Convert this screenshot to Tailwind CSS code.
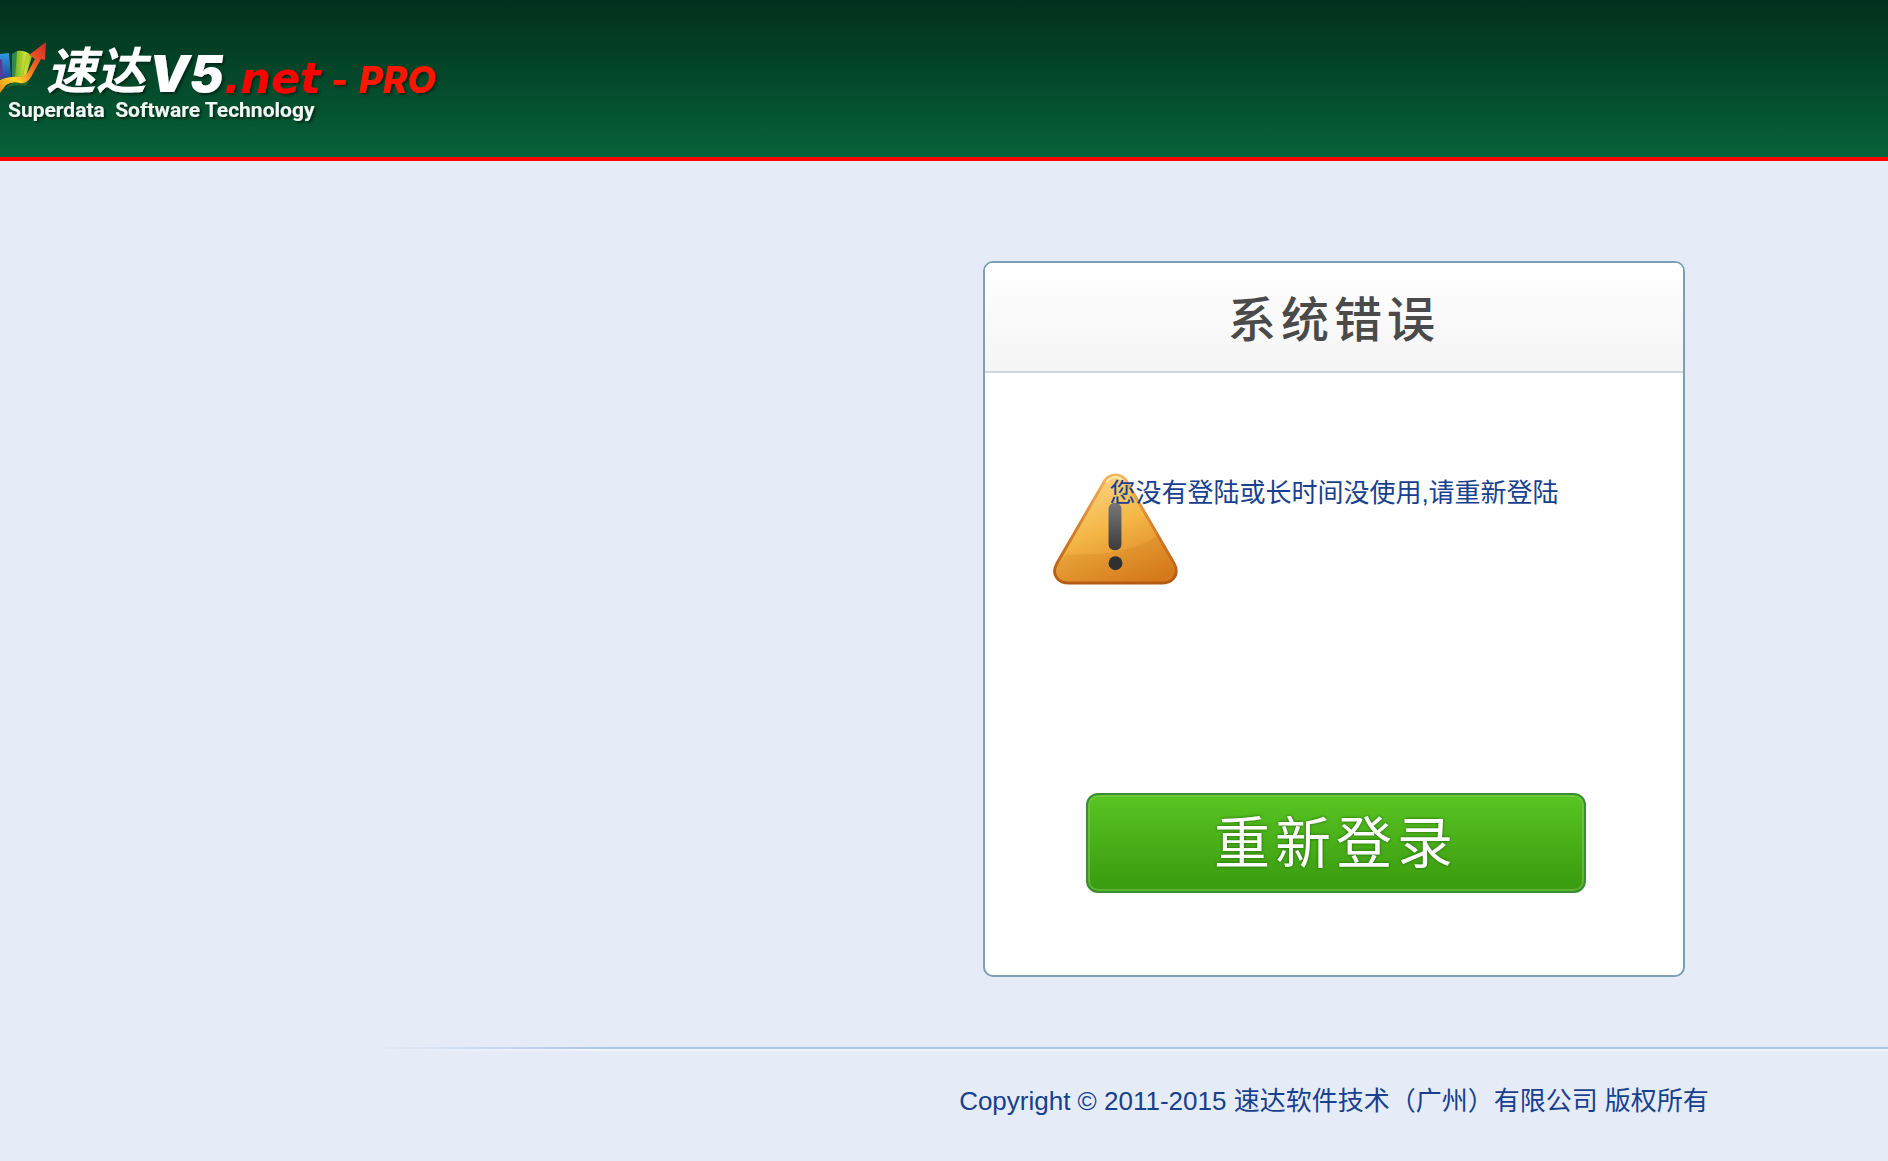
<!DOCTYPE html>
<html lang="zh-CN">

<head>
    <meta charset="UTF-8">
    <meta name="viewport" content="width=device-width, initial-scale=1.0">
    <title>系统错误</title>
    <script src="https://cdn.jsdelivr.net/npm/@tailwindcss/browser@4"></script>
</head>

<body class="min-h-screen overflow-x-hidden bg-[#e5ecf8] font-['Liberation_Sans','Noto_Sans_CJK_SC',sans-serif] text-[26px] leading-8 text-[#17408f]">
    <!-- Header -->
    <header class="border-b-4 border-[#ff0000] bg-linear-to-b from-[#02301c] to-[#066239]">
        <svg class="block h-[157px] w-[450px]" viewBox="0 0 450 157" role="img" aria-label="速达V5.net - PRO">
            <defs>
                <linearGradient id="book1" x1="0" y1="0" x2="0" y2="1">
                    <stop offset="0" stop-color="#2f9be0" />
                    <stop offset="1" stop-color="#24449c" />
                </linearGradient>
                <linearGradient id="book2" x1="0" y1="0" x2="1" y2="0">
                    <stop offset="0" stop-color="#6db52c" />
                    <stop offset="0.6" stop-color="#d3e02f" />
                    <stop offset="1" stop-color="#8cc436" />
                </linearGradient>
                <linearGradient id="arrow" x1="0" y1="1" x2="1" y2="0">
                    <stop offset="0" stop-color="#e88a1c" />
                    <stop offset="0.3" stop-color="#ffd52a" />
                    <stop offset="0.6" stop-color="#ee6a20" />
                    <stop offset="1" stop-color="#d8232a" />
                </linearGradient>
                <filter id="shadow" x="-5%" y="-20%" width="115%" height="150%">
                    <feDropShadow dx="2" dy="2" stdDeviation="1" flood-color="#001a0c" flood-opacity="0.7" />
                </filter>
            </defs>
            <path d="M0 54 L9 53 L11 77 L0 79 Z" fill="url(#book1)" />
            <path d="M0 59 L2 60 L3 78 L0 79 Z" fill="#5b3a94" />
            <path d="M12 54 L17 51 L16 77 L12 77 Z" fill="#2f8a4a" />
            <path d="M17 51 Q26 50 32 56 L26 76 L15 78 Z" fill="url(#book2)" />
            <path d="M22 53 L19 75 M27 54 L23 75" stroke="#9cc62c" stroke-width="1" fill="none" />
            <path d="M6 88 Q14 84 26 86 L29 82 L12 82 Z" fill="#3c7a2c" fill-opacity="0.6" />
            <path d="M0 80 Q9 76 20 77 Q26 76 29 70 L35 59 L29 55 L46 42 L45 60 L41 59 L31 77 Q27 84 20 83 Q12 81 6 85 L0 93 Z" fill="url(#arrow)" />
            <g filter="url(#shadow)">
                <text x="46" y="89" font-family="Noto Sans CJK SC" font-size="50" font-weight="700" font-style="italic" fill="#fff">速达</text>
                <text x="149" y="92" font-family="Inter" font-size="51" font-weight="900" font-style="italic" fill="#fff">V5</text>
                <text x="224" y="93" font-family="DejaVu Sans" font-size="43" font-weight="700" font-style="italic" fill="#ff0000">.net</text>
                <text x="331" y="93" font-family="Inter" font-size="36" font-weight="800" font-style="italic" fill="#ff1800">-</text>
                <text x="359" y="93" font-family="Inter" font-size="37" font-weight="800" font-style="italic" fill="#ff1800">PRO</text>
                <text x="8" y="117" font-family="Roboto" font-size="21" font-weight="700" fill="#f2f7f4" xml:space="preserve">Superdata  Software Technology</text>
            </g>
        </svg>
    </header>

    <!-- Error card -->
    <main class="flex justify-center pt-[100px] pl-[780px]">
        <section class="w-full max-w-[702px] rounded-[10px] border-2 border-[#7c9fb4] bg-white">
            <div class="rounded-t-lg border-b-2 border-[#d3d7da] bg-linear-to-b from-white to-[#f5f5f5] pt-6 pb-[26px] text-center">
                <h1 class="font-['Noto_Sans_CJK_SC',sans-serif] text-5xl leading-[58px] font-medium tracking-[5px] text-[#4a4a4a]">系统错误</h1>
            </div>
            <div class="relative flex flex-col items-center px-[68px] pt-[104px] pb-[82px]">
                <svg class="absolute top-[100px] left-[68px] h-[113px] w-[125px]" viewBox="0 0 126 114" aria-hidden="true">
                    <defs>
                        <linearGradient id="tri" x1="0.3" y1="0" x2="0.75" y2="1">
                            <stop offset="0" stop-color="#fbd484" />
                            <stop offset="0.45" stop-color="#f4b748" />
                            <stop offset="1" stop-color="#d87d1e" />
                        </linearGradient>
                        <linearGradient id="edge" x1="0" y1="0" x2="0" y2="1">
                            <stop offset="0" stop-color="#f0b65c" />
                            <stop offset="0.5" stop-color="#d5802b" />
                            <stop offset="1" stop-color="#b55a12" />
                        </linearGradient>
                        <linearGradient id="mark" x1="0" y1="0" x2="0" y2="1">
                            <stop offset="0" stop-color="#777" />
                            <stop offset="1" stop-color="#3c3c3c" />
                        </linearGradient>
                    </defs>
                    <path d="M52 8 Q56 2 63 2 Q70 2 74 8 L122 91 Q127 100 121 107 Q117 111 110 111 L16 111 Q8 111 4 106 Q-1 100 4 91 Z" fill="url(#tri)" stroke="url(#edge)" stroke-width="3" />
                    <path d="M14 82 Q75 85 107 62 L120 92 Q124 101 119 105 Q116 109 110 109 L16 109 Q8 109 5 104 Q2 98 6 91 Z" fill="#c96a10" fill-opacity="0.18" />
                    <path d="M54 9 Q58 4 63 4 Q68 4 72 9" fill="none" stroke="#fde6b0" stroke-width="2" />
                    <rect x="56" y="30" width="13" height="48" rx="6" fill="url(#mark)" />
                    <circle cx="63" cy="91" r="7" fill="#303030" />
                </svg>
                <p class="relative leading-8">您没有登陆或长时间没使用,请重新登陆</p>
                <button type="button" class="mt-[284px] ml-1 h-[100px] w-[500px] max-w-full rounded-xl border-2 border-[#3b8c32] bg-linear-to-b from-[#59c522] to-[#389a0e] pb-2 font-['Noto_Sans_CJK_SC',sans-serif] text-[56px] leading-none font-normal tracking-[5px] text-white shadow-[inset_0_0_0_2px_rgba(125,205,85,0.5)] text-shadow-[0_0_3px_#1f5c08]">重新登录</button>
            </div>
        </section>
    </main>

    <!-- Footer -->
    <footer class="pt-[70px]">
        <div class="ml-[370px] h-[2px] bg-linear-to-r from-transparent to-[#aec4e4] to-[240px]"></div>
        <div class="ml-[370px] h-[2px] bg-linear-to-r from-transparent to-[#f1f5fc] to-[240px]"></div>
        <p class="pt-[34px] pb-9 pl-[780px] text-center leading-8">Copyright © 2011-2015 速达软件技术（广州）有限公司 版权所有</p>
    </footer>
</body>

</html>
